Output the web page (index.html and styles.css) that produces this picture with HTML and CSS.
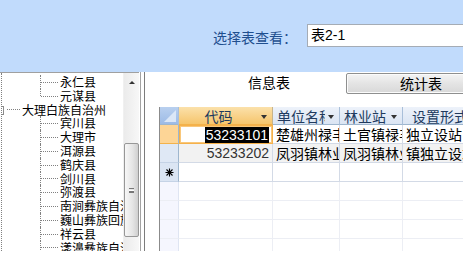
FILE: index.html
```html
<!DOCTYPE html>
<html lang="zh">
<head>
    <meta charset="UTF-8">
    <title>选择表查看</title>
    <link rel="stylesheet" href="styles.css">
</head>
<body>
<div class="topbar">
    <label class="pick-label" for="tablePick">选择表查看：</label>
    <div class="pick-box" id="tablePick">表2-1</div>
</div>

<div class="content">
    <!-- Дерево районов -->
    <div class="tree-panel">
        <div class="tree">
            <div class="group">
                <div class="node">永仁县</div>
                <div class="node last">元谋县</div>
            </div>
            <div class="parent"><span class="toggle"></span>大理白族自治州</div>
            <div class="group">
                <div class="node">宾川县</div>
                <div class="node">大理市</div>
                <div class="node">洱源县</div>
                <div class="node">鹤庆县</div>
                <div class="node">剑川县</div>
                <div class="node">弥渡县</div>
                <div class="node">南涧彝族自治县</div>
                <div class="node">巍山彝族回族自治县</div>
                <div class="node">祥云县</div>
                <div class="node">漾濞彝族自治县</div>
            </div>
        </div>
        <div class="vscroll">
            <div class="arrow-up"></div>
            <div class="thumb"><span class="grip"></span></div>
        </div>
    </div>

    <div class="splitter"></div>

    <div class="main">
        <div class="tabs">
            <div class="tab active">信息表</div>
            <div class="tab button">统计表</div>
        </div>

        <div class="grid">
            <div class="grid-row head">
                <div class="cell sel corner"></div>
                <div class="cell c-code current"><span class="h-text">代码</span><span class="drop"></span></div>
                <div class="cell c-name"><span class="h-text left">单位名称</span><span class="drop"></span></div>
                <div class="cell c-station"><span class="h-text left">林业站</span><span class="drop"></span></div>
                <div class="cell c-form"><span class="h-text">设置形式</span></div>
            </div>
            <div class="grid-row selected">
                <div class="cell sel"></div>
                <div class="cell c-code num active-cell"><span class="marked">53233101</span></div>
                <div class="cell c-name">楚雄州禄丰县</div>
                <div class="cell c-station">土官镇禄丰林业站</div>
                <div class="cell c-form">独立设站</div>
            </div>
            <div class="grid-row alt">
                <div class="cell sel"></div>
                <div class="cell c-code num">53233202</div>
                <div class="cell c-name">凤羽镇林业站</div>
                <div class="cell c-station">凤羽镇林业站</div>
                <div class="cell c-form">镇独立设站</div>
            </div>
            <div class="grid-row new">
                <div class="cell sel">
                    <svg width="9" height="9" viewBox="0 0 9 9">
                        <path d="M4.5 0.5V8.5M0.5 4.5H8.5M1.5 1.5L7.5 7.5M7.5 1.5L1.5 7.5" stroke="#000" stroke-width="1.1"/>
                    </svg>
                </div>
                <div class="cell c-code"></div>
                <div class="cell c-name"></div>
                <div class="cell c-station"></div>
                <div class="cell c-form"></div>
            </div>
            <div class="grid-row empty">
                <div class="cell sel"></div>
                <div class="cell c-code"></div>
                <div class="cell c-name"></div>
                <div class="cell c-station"></div>
                <div class="cell c-form"></div>
            </div>
            <div class="grid-row empty">
                <div class="cell sel"></div>
                <div class="cell c-code"></div>
                <div class="cell c-name"></div>
                <div class="cell c-station"></div>
                <div class="cell c-form"></div>
            </div>
            <div class="grid-row empty">
                <div class="cell sel"></div>
                <div class="cell c-code"></div>
                <div class="cell c-name"></div>
                <div class="cell c-station"></div>
                <div class="cell c-form"></div>
            </div>
            <div class="grid-row empty">
                <div class="cell sel"></div>
                <div class="cell c-code"></div>
                <div class="cell c-name"></div>
                <div class="cell c-station"></div>
                <div class="cell c-form"></div>
            </div>
        </div>
    </div>
</div>
</body>
</html>
```

FILE: styles.css
```css
body {
    margin: 0;
    width: 463px;
    height: 276px;
    overflow: hidden;
    background-color: #ffffff;
    font-family: "Liberation Sans", "Noto Sans CJK SC", sans-serif;
}

/* Верхняя панель */
.topbar {
    height: 72px;
    background-color: #c1dbfc;
    display: flex;
    align-items: center;
    padding-left: 213px;
    box-sizing: border-box;
    padding-top: 2px;
    overflow: hidden;
}

.pick-label {
    font-size: 14px;
    color: #1f4f8f;
    width: 94px;
    flex-shrink: 0;
    white-space: nowrap;
}

.pick-box {
    width: 200px;
    flex-shrink: 0;
    height: 23px;
    box-sizing: border-box;
    border: 1px solid #a5acb5;
    background-color: #ffffff;
    font-size: 14px;
    line-height: 21px;
    padding-left: 3px;
    color: #000;
    margin-top: -3px;
}

.content {
    display: flex;
    height: 179px;
    overflow: hidden;
}

/* Дерево */
.tree-panel {
    width: 139px;
    flex-shrink: 0;
    display: flex;
    border-top: 1px solid #a0a0a0;
    box-sizing: border-box;
}

.tree {
    width: 121px;
    margin-left: 1px;
    border-left: 1px dotted #808080;
    padding-top: 2px;
    font-family: "Noto Sans CJK SC", sans-serif;
    font-size: 12px;
    line-height: 13.8px;
    color: #000;
    white-space: nowrap;
    overflow: hidden;
}

.group {
    margin-left: 38px;
}

.node {
    position: relative;
    padding-left: 20px;
    height: 13.8px;
}

.node::before {
    content: "";
    position: absolute;
    left: 0;
    top: 0;
    bottom: 0;
    border-left: 1px dotted #808080;
}

.node.last::before {
    bottom: 50%;
}

.node::after {
    content: "";
    position: absolute;
    left: 1px;
    width: 17px;
    top: 50%;
    border-top: 1px dotted #808080;
}

.parent {
    position: relative;
    padding-left: 20px;
    height: 13.8px;
}

.parent::after {
    content: "";
    position: absolute;
    left: 5px;
    width: 13px;
    top: 50%;
    border-top: 1px dotted #808080;
}

.toggle {
    position: absolute;
    left: -7px;
    top: 3px;
    width: 9px;
    height: 9px;
    box-sizing: border-box;
    border: 1px solid #8c8c8c;
    background-color: #fff;
    z-index: 1;
}

.toggle::before {
    content: "";
    position: absolute;
    left: 1px;
    top: 3px;
    width: 5px;
    border-top: 1px solid #000;
}

/* Полоса прокрутки */
.vscroll {
    width: 16px;
    background: linear-gradient(to right, #ebebeb, #f7f7f7);
    border-left: 1px solid #f0f0f0;
    box-sizing: border-box;
}

.arrow-up {
    width: 0;
    height: 0;
    margin: 8px auto 0;
    border-left: 3px solid transparent;
    border-right: 3px solid transparent;
    border-bottom: 3px solid #333;
}

.thumb {
    margin-top: 59px;
    height: 94px;
    border: 1px solid #979797;
    border-radius: 2px;
    background: linear-gradient(to right, #f7f7f7, #e4e4e4 60%, #cfcfcf);
    box-sizing: border-box;
    display: flex;
    align-items: center;
    justify-content: center;
}

.grip {
    width: 5px;
    height: 5px;
    border-top: 1px solid #777;
    border-bottom: 1px solid #777;
    background: linear-gradient(#fff 0 1px, #777 1px 2px, transparent 2px) 0 1px / 5px 3px no-repeat;
    box-sizing: border-box;
}

.splitter {
    width: 3px;
    flex-shrink: 0;
    margin: 0 1px;
    border-left: 1px solid #a3a3a3;
    border-right: 1px solid #7c7c7c;
}

/* Основная часть */
.main {
    flex: 1;
    padding-left: 13px;
    overflow: hidden;
}

.tabs {
    display: flex;
    gap: 2px;
    margin: 1px 0 0 35px;
    height: 21px;
}

.tab {
    width: 150px;
    flex-shrink: 0;
    height: 21px;
    line-height: 19px;
    text-align: center;
    font-family: "Noto Sans CJK SC", sans-serif;
    font-size: 14px;
    color: #000;
    box-sizing: border-box;
}

.tab.button {
    border: 1px solid #8e8f8f;
    border-radius: 2px;
    background: linear-gradient(#f4f4f4, #e4e4e4 50%, #d8d8d8);
    box-shadow: inset 0 0 0 1px #fbfbfb;
}

/* Таблица */
.grid {
    margin-top: 13px;
    border-left: 1px solid #8b8b8b;
    width: 400px;
}

.grid-row {
    display: flex;
    height: 19px;
}

.grid-row.head {
    height: 18px;
}

.cell {
    box-sizing: border-box;
    flex-shrink: 0;
    height: 100%;
    border-right: 1px solid #d3dae6;
    border-bottom: 1px solid #d3dae6;
    font-family: "Noto Sans CJK SC", sans-serif;
    font-size: 14px;
    line-height: 18px;
    white-space: nowrap;
    overflow: hidden;
    padding-left: 3px;
}

.sel {
    width: 19px;
    padding: 0;
    display: flex;
    align-items: center;
    justify-content: center;
    border-right-color: #9eb6ce;
    border-bottom-color: #c5d3e6;
}

.c-code {
    width: 94px;
}

.c-name {
    width: 67px;
}

.c-station {
    width: 63px;
}

.c-form {
    width: 120px;
}

.head .cell {
    display: flex;
    align-items: center;
    background: linear-gradient(#edf2fa, #dbe5f3);
    border-right-color: #a9bfd9;
    border-bottom-color: #9eb6ce;
    color: #203a5e;
    padding: 0;
}

.head .corner {
    background: linear-gradient(#b9d0ef, #9dbbe6);
    position: relative;
}

.head .corner::after {
    content: "";
    position: absolute;
    right: 2px;
    bottom: 2px;
    border-left: 12px solid transparent;
    border-bottom: 12px solid #dbe7f7;
}

.head .current {
    background: linear-gradient(#fbe1ab, #f6c56c);
    border-bottom-color: #f3b24b;
    border-right-color: #c7b48c;
}

.h-text {
    flex: 1;
    text-align: center;
    overflow: hidden;
}

.h-text.left {
    text-align: left;
    padding-left: 4px;
}

.drop {
    width: 0;
    height: 0;
    flex-shrink: 0;
    margin: 2px 5px 0 3px;
    border-left: 3px solid transparent;
    border-right: 3px solid transparent;
    border-top: 4px solid #333;
}

.c-form .h-text {
    text-align: left;
    padding-left: 9px;
}

.num {
    font-family: "Liberation Sans", sans-serif;
    text-align: right;
    padding-right: 3px;
}

.selected .sel {
    background-color: #fdd596;
    border-bottom-color: #f3b24b;
}

.active-cell {
    border: 1px solid #f5b14b;
    box-shadow: inset 0 0 0 1px #f9c77a;
    line-height: 16px;
    padding-top: 1px;
}

.marked {
    background-color: #000;
    color: #fff;
    display: inline-block;
    padding: 0 1px;
    line-height: 16px;
}

.alt .cell {
    background-color: #f2f2f2;
}

.alt .num {
    color: #333;
}

.alt .sel {
    background-color: #dfe8f5;
}

.new .sel {
    background-color: #dbe5f3;
}

.empty .cell {
    border-right-color: #eceef4;
    border-bottom-color: #eceef4;
}

.empty .sel {
    background-color: #f5f6fe;
    border-right-color: #dfe5f2;
}
```
